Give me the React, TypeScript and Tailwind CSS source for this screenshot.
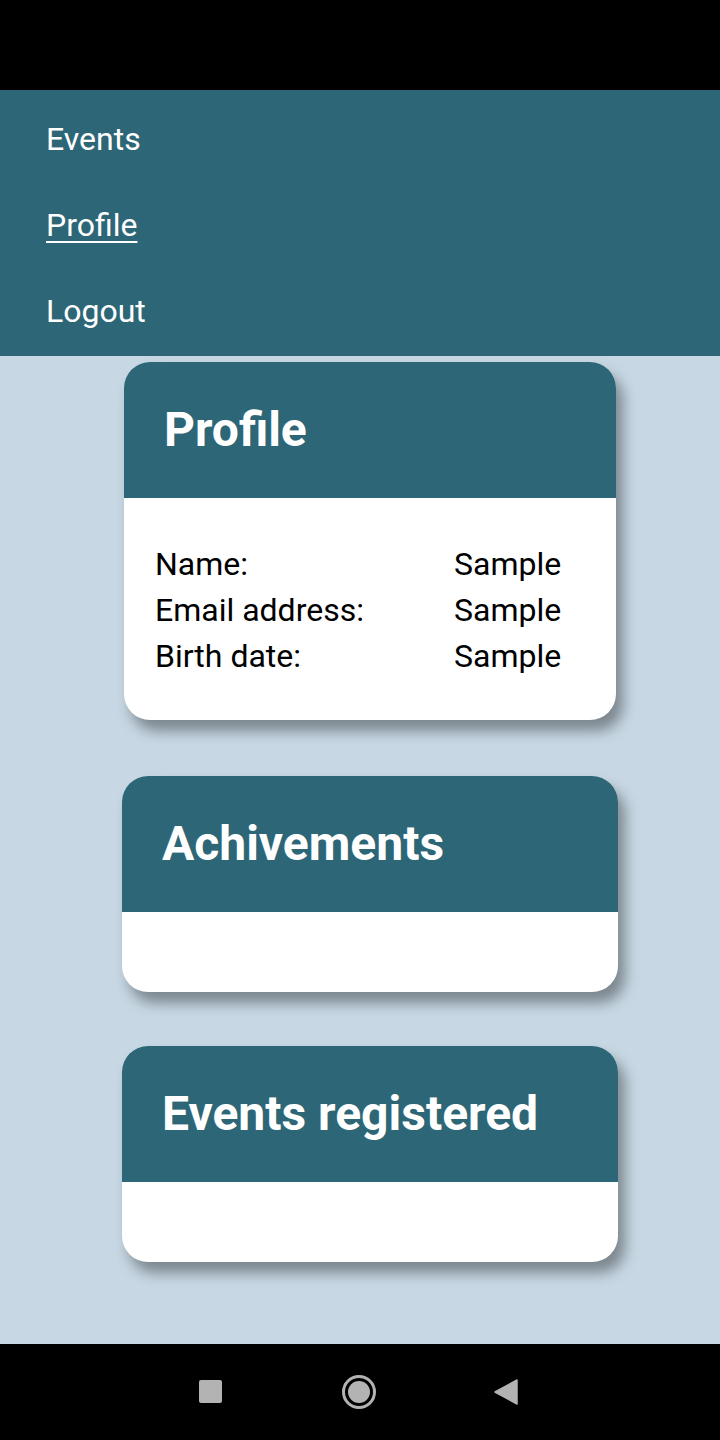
import React from "react";

const NAV = [
  { label: "Events", active: false },
  { label: "Profile", active: true },
  { label: "Logout", active: false },
];

const FIELDS = [
  { label: "Name:", value: "Sample" },
  { label: "Email address:", value: "Sample" },
  { label: "Birth date:", value: "Sample" },
];

function Card({ title, children, className }: { title: string; children?: React.ReactNode; className: string }) {
  return (
    <div className={`rounded-[26px] overflow-hidden bg-white shadow-[7px_11px_14px_rgba(0,0,0,0.38)] ${className}`}>
      <div className="h-[136px] bg-[#2d6777] flex items-center px-10">
        <h2 className="text-[48px] font-bold text-white leading-none">{title}</h2>
      </div>
      {children}
    </div>
  );
}

export default function App() {
  return (
    <div className="w-[720px] h-[1440px] flex flex-col bg-[#c7d8e4] font-['Roboto',sans-serif]">
      {/* status bar */}
      <div className="h-[90px] bg-black shrink-0" />

      {/* menu */}
      <nav className="bg-[#2d6777] pt-[6px] pb-[2px] shrink-0">
        {NAV.map((item) => (
          <div key={item.label} className="h-[86px] flex items-center pl-[46px]">
            <a
              className={`text-[32px] text-white ${item.active ? "underline decoration-2 underline-offset-[5px]" : ""}`}
            >
              {item.label}
            </a>
          </div>
        ))}
      </nav>

      <main className="flex-1 flex flex-col pt-[6px]">
        <Card title="Profile" className="w-[492px] ml-[124px]">
          <div className="grid grid-cols-[299px_auto] px-[31px] pt-[43px] pb-[41px] text-[32px] leading-[46px] text-black">
            {FIELDS.map((f) => (
              <React.Fragment key={f.label}>
                <span>{f.label}</span>
                <span>{f.value}</span>
              </React.Fragment>
            ))}
          </div>
        </Card>

        <Card title="Achivements" className="w-[496px] ml-[122px] mt-[56px]">
          <div className="h-[80px]" />
        </Card>

        <Card title="Events registered" className="w-[496px] ml-[122px] mt-[54px]">
          <div className="h-[80px]" />
        </Card>
      </main>

      {/* system nav bar */}
      <div className="h-[96px] bg-black shrink-0 flex items-center justify-center">
        <div className="relative w-full h-full">
          <div className="absolute left-[199px] top-[36px] w-[23px] h-[23px] rounded-[2px] bg-[#b3b3b3]" />
          <div className="absolute left-[342px] top-[31px] w-[34px] h-[34px] rounded-full border-[3px] border-[#b3b3b3] flex items-center justify-center">
            <div className="w-[22px] h-[22px] rounded-full bg-[#b3b3b3]" />
          </div>
          <svg className="absolute left-[494px] top-[35px]" width="24" height="26" viewBox="0 0 24 26">
            <path d="M23 1 L23 25 L1 13 Z" fill="#b3b3b3" stroke="#b3b3b3" strokeWidth="1.5" strokeLinejoin="round" />
          </svg>
        </div>
      </div>
    </div>
  );
}
